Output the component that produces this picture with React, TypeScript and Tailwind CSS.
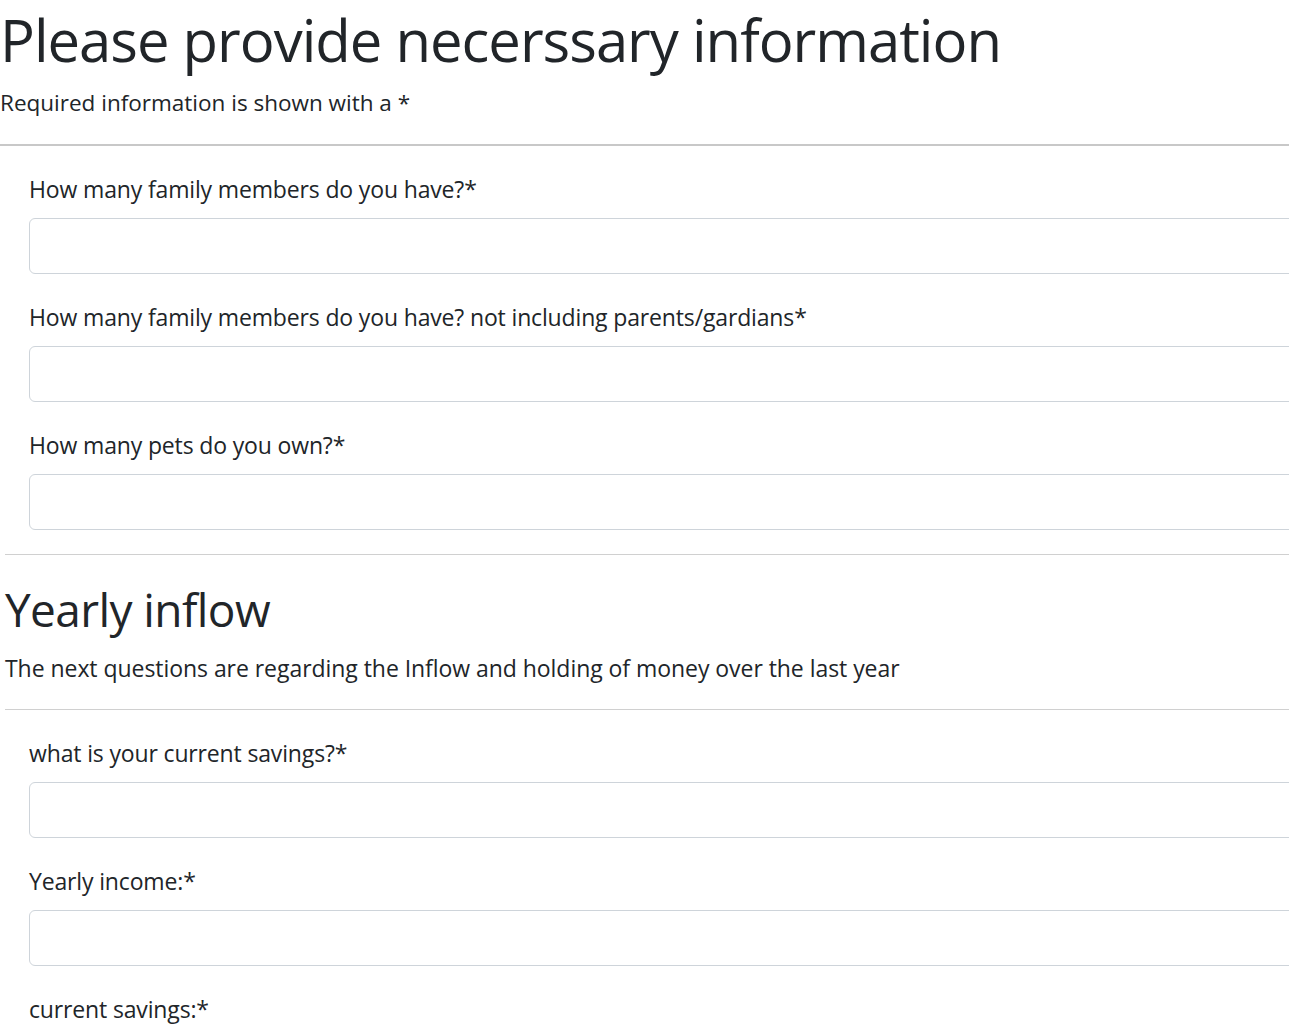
import { useState } from 'react';

const householdFields = [
  { id: 'family', label: 'How many family members do you have?*' },
  { id: 'siblings', label: 'How many family members do you have? not including parents/gardians*' },
  { id: 'pets', label: 'How many pets do you own?*' },
];

const inflowFields = [
  { id: 'savings', label: 'what is your current savings?*' },
  { id: 'income', label: 'Yearly income:*' },
  { id: 'currentSavings', label: 'current savings:*' },
];

function Field({ id, label, value, onChange }: { id: string; label: string; value: string; onChange: (v: string) => void }) {
  return (
    <div className="mb-[25px]">
      <label htmlFor={id} className="block text-[23px] tracking-[-0.15px] leading-[36px] mb-[11px]">
        {label}
      </label>
      <input
        id={id}
        type="text"
        value={value}
        onChange={(e) => onChange(e.target.value)}
        className="block w-[1300px] h-[56px] px-3 bg-white border border-[#ced4da] rounded-[6px] text-[23px] outline-none"
      />
    </div>
  );
}

export default function App() {
  const [values, setValues] = useState<Record<string, string>>({});
  const setValue = (id: string) => (v: string) => setValues(prev => ({ ...prev, [id]: v }));

  return (
    <div className="w-full overflow-hidden bg-white text-[#212529] font-['Open_Sans','Liberation_Sans',sans-serif]">
      <h1 className="mt-[4px] text-[58px] tracking-[-1px] leading-[72px] font-normal">Please provide necerssary information</h1>
      <p className="mt-[9px] text-[22.5px] leading-[36px]">Required information is shown with a *</p>
      <hr className="mt-[23px] border-0 border-t-2 border-[#c8c8c8]" />

      <div className="pl-[29px] pt-[25px]">
        {householdFields.map(f => (
          <Field key={f.id} id={f.id} label={f.label} value={values[f.id] || ''} onChange={setValue(f.id)} />
        ))}
      </div>

      <div className="pl-[5px]">
        <hr className="-mt-[1px] border-0 border-t border-[#d0d0d0]" />
        <h2 className="mt-[25px] text-[46px] tracking-[-0.6px] leading-[58px] font-normal">Yearly inflow</h2>
        <p className="mt-[12px] text-[23px] tracking-[-0.05px] leading-[36px]">The next questions are regarding the Inflow and holding of money over the last year</p>
        <hr className="mt-[23px] border-0 border-t border-[#d0d0d0]" />
      </div>

      <div className="pl-[29px] pt-[25px]">
        {inflowFields.map(f => (
          <Field key={f.id} id={f.id} label={f.label} value={values[f.id] || ''} onChange={setValue(f.id)} />
        ))}
      </div>
    </div>
  );
}
